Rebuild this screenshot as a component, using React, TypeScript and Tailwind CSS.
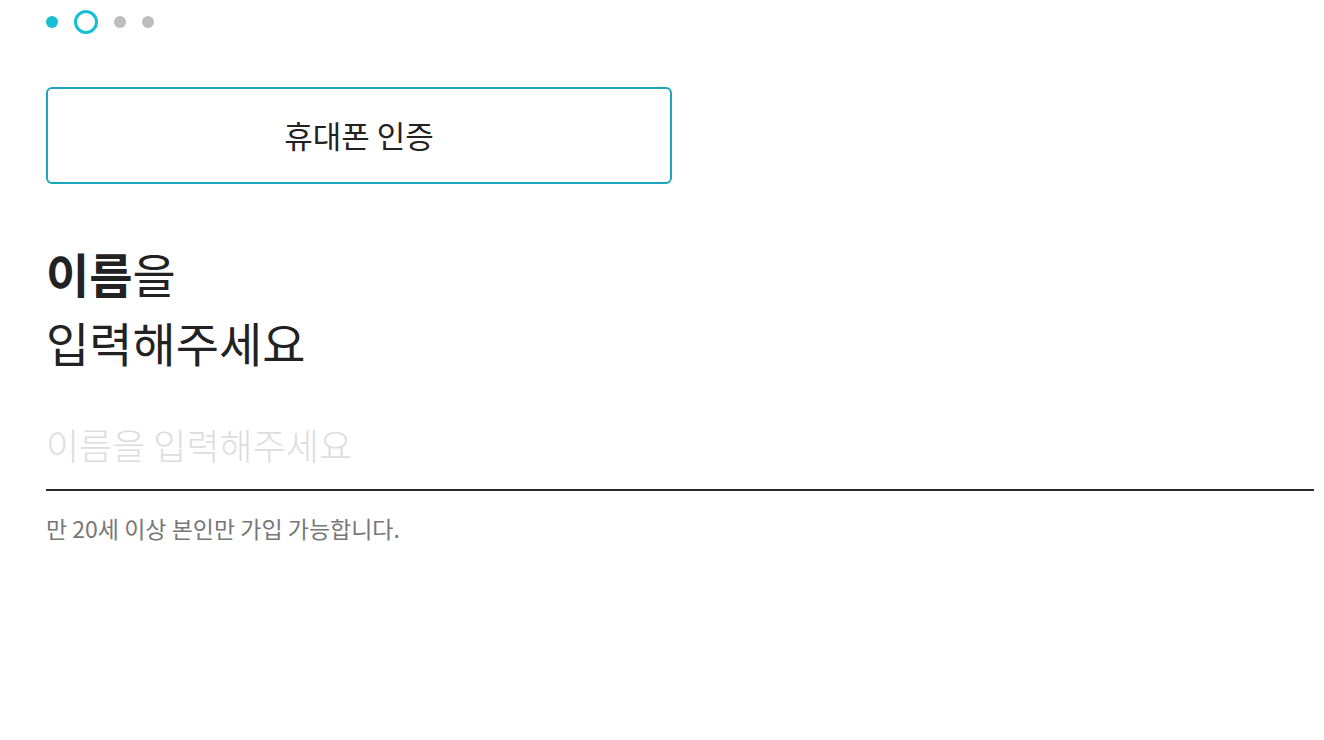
import { useState } from "react";

const steps = [0, 1, 2, 3];

function StepDots({ current }: { current: number }) {
  return (
    <div className="flex items-center h-[44px] gap-[16px]">
      {steps.map((i) =>
        i === current ? (
          <span
            key={i}
            className="w-[24px] h-[24px] rounded-full border-[3px] border-[#17c0d4] bg-white"
          />
        ) : (
          <span
            key={i}
            className={
              i < current
                ? "w-[12px] h-[12px] rounded-full bg-[#17c0d4]"
                : "w-[12px] h-[12px] rounded-full bg-[#bdbdbd]"
            }
          />
        )
      )}
    </div>
  );
}

export default function App() {
  const [name, setName] = useState("");

  return (
    <div
      className="min-h-[740px] bg-white pl-[46px] pr-[10px] text-[#222]"
      style={{ fontFamily: '"Noto Sans CJK KR", "Noto Sans", sans-serif' }}
    >
      <StepDots current={1} />

      <button
        type="button"
        className="mt-[43px] w-[626px] h-[97px] rounded-[6px] border-2 border-[#1ba6ba] bg-white text-[31px] text-[#222] flex items-center justify-center"
      >
        휴대폰 인증
      </button>

      <h2 className="mt-[54px] text-[47px] leading-[69px] font-normal">
        <span className="font-bold">이름</span>을
        <br />
        입력해주세요
      </h2>

      <div className="mt-[38px] border-b-2 border-[#2b2b2b]">
        <input
          value={name}
          onChange={(e) => setName(e.target.value)}
          placeholder="이름을 입력해주세요"
          className="w-full h-[75px] pb-[15px] text-[36px] font-light bg-transparent outline-none placeholder:text-[#dddddd]"
        />
      </div>

      <p className="mt-[20px] text-[23px] leading-[34px] text-[#777]">
        만 20세 이상 본인만 가입 가능합니다.
      </p>
    </div>
  );
}
